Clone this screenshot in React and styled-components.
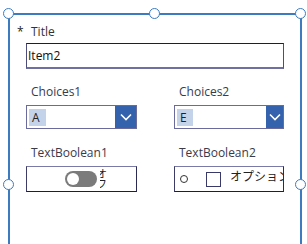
import React from "react";
import styled, { createGlobalStyle } from "styled-components";

const Global = createGlobalStyle`
  html, body { margin: 0; padding: 0; background: #fff; }
  body { font-family: "Open Sans", "Noto Sans", "Noto Sans CJK JP", sans-serif; overflow: hidden; }
`;

const Page = styled.div`
  width: 307px;
  height: 244px;
  padding: 13px 0 0 8px;
  box-sizing: border-box;
`;

const Frame = styled.div`
  position: relative;
  width: 294px;
  height: 240px;
  box-sizing: border-box;
  border: 2px solid #3b7cc0;
  border-bottom: none;
  padding: 8px 0 0 16px;
`;

const Handle = styled.span`
  position: absolute;
  width: 9px;
  height: 9px;
  border-radius: 50%;
  background: #fff;
  border: 1.5px solid #3b7cc0;
  left: ${(p) => p.$x}px;
  top: ${(p) => p.$y}px;
`;

const TitleRow = styled.div`
  display: flex;
  align-items: center;
  height: 16px;
  margin-left: -9px;
  gap: 8px;
  font-size: 12px;
  color: #333;
`;

const Star = styled.span`
  font-size: 12px;
  color: #222;
  width: 6px;
`;

const Label = styled.div`
  font-size: 12px;
  color: #3a3a4a;
  height: 16px;
  line-height: 16px;
  padding-left: 5px;
`;

const TextInput = styled.div`
  margin-top: 4px;
  width: 258px;
  height: 26px;
  box-sizing: border-box;
  border: 1px solid #4d4d7a;
  border-top-color: #1c1c3c;
  border-bottom: 2px solid #7070a0;
  font-size: 12px;
  color: #111;
  line-height: 23px;
  padding-left: 1px;
`;

const Grid = styled.div`
  display: grid;
  grid-template-columns: 111px 110px;
  column-gap: 37px;
  margin-top: ${(p) => p.$mt}px;
`;

const Field = styled.div`
  display: flex;
  flex-direction: column;
  gap: ${(p) => p.$gap}px;
`;

const Dropdown = styled.div`
  display: flex;
  height: 24px;
  box-sizing: border-box;
  border: 1px solid #6a6a9c;
`;

const DropValue = styled.div`
  flex: 1;
  display: flex;
  align-items: center;
  padding-left: 2px;
`;

const Selected = styled.span`
  background: #c5d3ea;
  font-size: 12px;
  color: #222;
  height: 17px;
  line-height: 17px;
  padding: 0 6px 0 3px;
`;

const Chevron = styled.div`
  width: ${(p) => p.$w}px;
  background: #3562ac;
  display: flex;
  align-items: center;
  justify-content: center;
`;

const BoolBox = styled.div`
  position: relative;
  height: 26px;
  box-sizing: border-box;
  border: 1.5px solid #7a7aa6;
  border-bottom-color: #1c1c44;
  border-left-color: #3c3c66;
  border-right-color: #2a2a55;
  display: flex;
  align-items: center;
  overflow: hidden;
`;

const Toggle = styled.span`
  margin-left: 38px;
  width: 32px;
  height: 16px;
  border-radius: 8px;
  background: #7b7b7b;
  position: relative;
  flex: none;
`;

const Knob = styled.span`
  position: absolute;
  left: 2px;
  top: 2px;
  width: 12px;
  height: 12px;
  border-radius: 50%;
  background: #fff;
`;

const ClipText = styled.span`
  width: 8px;
  margin-left: 3px;
  overflow: hidden;
  display: flex;
  flex-direction: column;
  font-size: 11px;
  line-height: 10px;
  color: #222;
  flex: none;
`;

const ClipChar = styled.span`
  margin-left: -4px;
  white-space: nowrap;
`;

const Radio = styled.span`
  margin-left: 5px;
  width: 6px;
  height: 6px;
  border-radius: 50%;
  border: 1px solid #333;
  flex: none;
`;

const Check = styled.span`
  margin-left: 18px;
  width: 15px;
  height: 15px;
  box-sizing: border-box;
  border: 1.5px solid #3a3a6a;
  flex: none;
`;

const OptionText = styled.span`
  margin-left: 9px;
  font-size: 12px;
  color: #222;
  white-space: nowrap;
  position: relative;
  top: -3px;
`;

const ChevronIcon = () => (
  <svg width="12" height="8" viewBox="0 0 12 8">
    <path d="M1 1.5 L6 6.5 L11 1.5" fill="none" stroke="#fff" strokeWidth="1.6" />
  </svg>
);

export default function App() {
  return (
    <Page>
      <Global />
      <Frame>
        <TitleRow>
          <Star>*</Star>
          <span>Title</span>
        </TitleRow>
        <TextInput>Item2</TextInput>
        <Grid $mt={15}>
          <Field $gap={5}>
            <Label>Choices1</Label>
            <Dropdown>
              <DropValue><Selected>A</Selected></DropValue>
              <Chevron $w={21}><ChevronIcon /></Chevron>
            </Dropdown>
          </Field>
          <Field $gap={5}>
            <Label>Choices2</Label>
            <Dropdown>
              <DropValue><Selected>E</Selected></DropValue>
              <Chevron $w={17}><ChevronIcon /></Chevron>
            </Dropdown>
          </Field>
        </Grid>
        <Grid $mt={16}>
          <Field $gap={5}>
            <Label>TextBoolean1</Label>
            <BoolBox>
              <Toggle><Knob /></Toggle>
              <ClipText>
                <ClipChar>オ</ClipChar>
                <ClipChar>フ</ClipChar>
              </ClipText>
            </BoolBox>
          </Field>
          <Field $gap={5}>
            <Label>TextBoolean2</Label>
            <BoolBox>
              <Radio />
              <Check />
              <OptionText>オプション</OptionText>
            </BoolBox>
          </Field>
        </Grid>
        <Handle $x={-7} $y={-7} />
        <Handle $x={139} $y={-7} />
        <Handle $x={285} $y={-7} />
        <Handle $x={-7} $y={164} />
        <Handle $x={285} $y={164} />
      </Frame>
    </Page>
  );
}
